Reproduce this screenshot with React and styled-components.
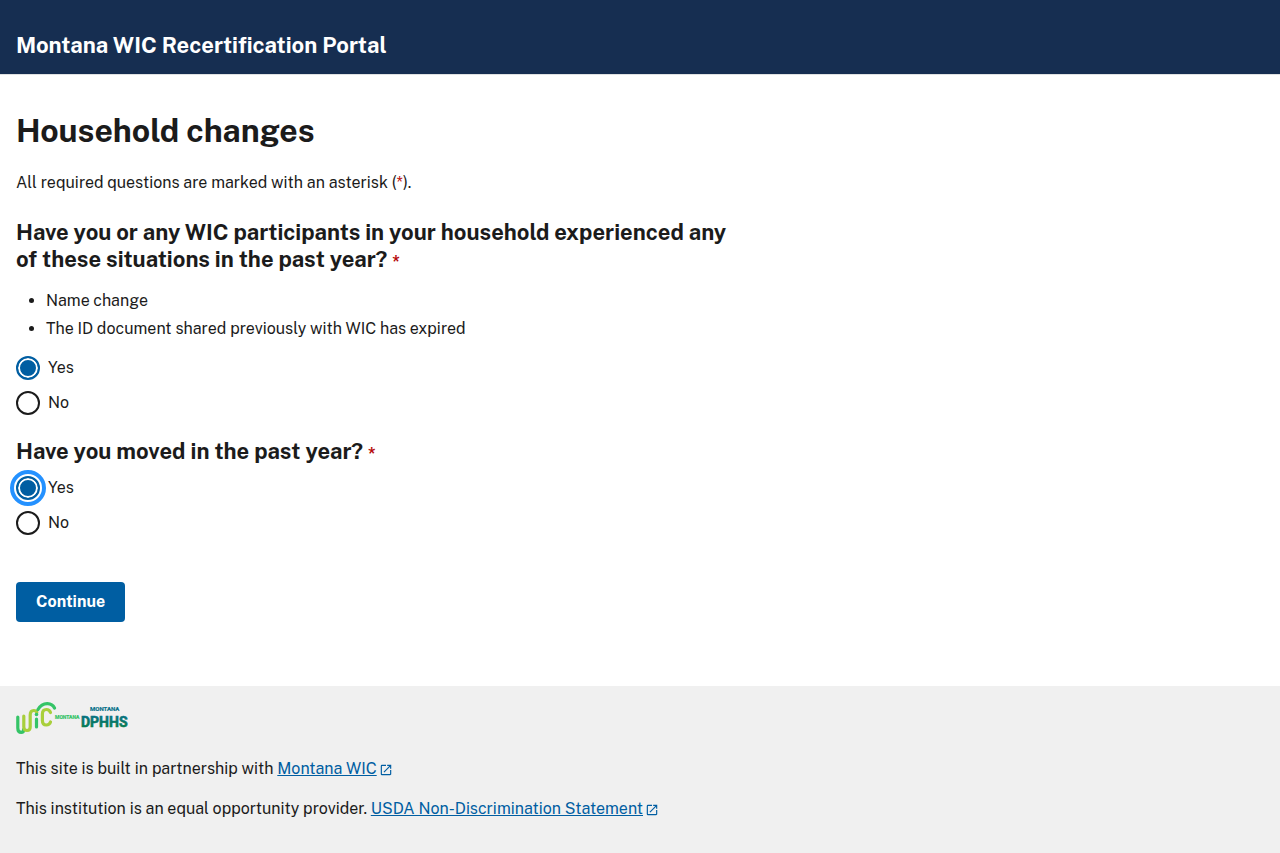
import React, { useEffect, useRef } from "react";
import styled, { createGlobalStyle } from "styled-components";

const GlobalStyle = createGlobalStyle`
  *, *::before, *::after { box-sizing: border-box; }
  html { background: #f0f0f0; }
  body {
    margin: 0;
    background: #fff;
    color: #1b1b1b;
    font-family: "Public Sans", Inter, Roboto, sans-serif;
    font-size: 16px;
    line-height: 24px;
  }
`;

const Header = styled.header`
  padding: 32px 16px 15px;
  background: #162e51;
  border-bottom: 1px solid #dfe1e2;
`;

const SiteTitle = styled.div`
  color: #fff;
  font-size: 22px;
  font-weight: 700;
  line-height: 27px;
`;

const Main = styled.main`
  padding: 32px 16px 64px;
`;

const PageTitle = styled.h1`
  margin: 0;
  font-size: 32px;
  font-weight: 700;
  line-height: 48px;
`;

const Intro = styled.p`
  margin: 16px 0 24px;
`;

const Required = styled.span`
  color: #b50909;
  font-size: 16px;
  font-weight: ${(p) => (p.$strong ? 700 : 400)};
`;

const Question = styled.fieldset`
  max-width: 720px;
  margin: 0 0 23px;
  padding: 0;
  border: 0;
`;

const Legend = styled.legend`
  padding: 0;
  font-size: 22px;
  font-weight: 700;
  line-height: 27px;
`;

const Situations = styled.ul`
  margin: 12px 0 4px;
  padding-left: 30px;
  line-height: 28px;
`;

const Options = styled.div`
  display: grid;
  gap: 11px;
  padding-top: 9px;
`;

const Option = styled.label`
  display: flex;
  align-items: center;
  gap: 8px;
  width: max-content;
`;

const Radio = styled.input`
  appearance: none;
  width: 24px;
  height: 24px;
  margin: 0;
  border: 2px solid #1b1b1b;
  border-radius: 50%;
  background: #fff;

  &:checked {
    border-color: #005ea2;
    background: #005ea2;
    box-shadow: inset 0 0 0 2px #fff;
  }

  &:focus {
    outline: 4px solid #2491ff;
    outline-offset: 2px;
  }
`;

const Continue = styled.button`
  margin-top: 24px;
  padding: 8px 20px;
  border: 0;
  border-radius: 4px;
  background: #005ea2;
  color: #fff;
  font: inherit;
  font-weight: 700;
  cursor: pointer;
`;

const Footer = styled.footer`
  padding: 16px 16px 32px;
  background: #f0f0f0;
`;

const Logo = styled.svg`
  display: block;
  width: 112px;
  height: 32px;
  margin-bottom: 23px;
`;

const LogoText = styled.text`
  font-family: Roboto, "Liberation Sans", sans-serif;
  font-weight: 700;
`;

const FooterText = styled.p`
  margin: 0 0 16px;

  &:last-child { margin-bottom: 0; }
`;

const Link = styled.a`
  color: #005ea2;
`;

const LinkIcon = styled.svg`
  width: 14px;
  height: 14px;
  margin-left: 2px;
  vertical-align: -3px;
  fill: currentColor;
`;

function ExternalLink({ href, children }) {
  return (
    <Link href={href}>
      {children}
      <LinkIcon viewBox="0 0 24 24" aria-hidden="true">
        <path d="M19 19H5V5h7V3H5a2 2 0 0 0-2 2v14a2 2 0 0 0 2 2h14c1.1 0 2-.9 2-2v-7h-2v7zM14 3v2h3.59l-9.83 9.83 1.41 1.41L19 6.41V10h2V3h-7z" />
      </LinkIcon>
    </Link>
  );
}

function YesNo({ name, yesRef }) {
  return (
    <Options>
      <Option>
        <Radio ref={yesRef} type="radio" name={name} value="yes" defaultChecked />
        Yes
      </Option>
      <Option>
        <Radio type="radio" name={name} value="no" />
        No
      </Option>
    </Options>
  );
}

function PartnerLogos() {
  return (
    <Logo viewBox="0 0 112 32" role="img" aria-label="Montana WIC and Montana DPHHS">
      <defs>
        <linearGradient id="agency" x1="0" y1="0" x2="0" y2="1">
          <stop offset="0" stopColor="#08708a" />
          <stop offset="1" stopColor="#087f45" />
        </linearGradient>
      </defs>
      <g fill="none" strokeWidth="3.2" strokeLinecap="round">
        <path stroke="#35c467" d="M1.8 15v11q0 4.400 3.400 4.400q2.400 0 2.400-3" />
        <path stroke="#a8cf3b" d="M7.800 14v11q0 3.500 3.200 3.500t3.200-3.500V13q0-4.500 3.600-4.500q2.400 0 3 2" />
        <path stroke="#35c467" d="M20.500 17v8M22 7.500q3.500-6 9.500-5.900q5 .1 7 4.400" />
        <path stroke="#a8cf3b" d="M34.500 10.500q-1-3-4.200-3q-3.900 0-3.900 4.500v6.500q0 4.500 3.900 4.500q3.200 0 4.200-3" />
      </g>
      <circle cx="20.500" cy="12.500" r="1.800" fill="#35c467" />
      <LogoText x="39" y="17" fontSize="5" fill="#35c467" stroke="#35c467" strokeWidth=".2">MONTANA</LogoText>
      <LogoText x="74" y="9" fontSize="6" fill="#08708a" stroke="#08708a" strokeWidth=".2">MONTANA</LogoText>
      <LogoText x="65" y="25" fontSize="14" fill="url(#agency)" stroke="url(#agency)" strokeWidth=".6">DPHHS</LogoText>
    </Logo>
  );
}

export default function App() {
  const movedYes = useRef(null);

  useEffect(() => {
    movedYes.current?.focus();
  }, []);

  return (
    <>
      <GlobalStyle />
      <Header>
        <SiteTitle>Montana WIC Recertification Portal</SiteTitle>
      </Header>
      <Main>
        <PageTitle>Household changes</PageTitle>
        <Intro>
          All required questions are marked with an asterisk (<Required>*</Required>).
        </Intro>
        <form onSubmit={(e) => e.preventDefault()}>
          <Question>
            <Legend>
              Have you or any WIC participants in your household experienced any of these
              situations in the past year? <Required $strong>*</Required>
            </Legend>
            <Situations>
              <li>Name change</li>
              <li>The ID document shared previously with WIC has expired</li>
            </Situations>
            <YesNo name="situations" />
          </Question>
          <Question>
            <Legend>
              Have you moved in the past year? <Required $strong>*</Required>
            </Legend>
            <YesNo name="moved" yesRef={movedYes} />
          </Question>
          <Continue type="submit">Continue</Continue>
        </form>
      </Main>
      <Footer>
        <PartnerLogos />
        <FooterText>
          This site is built in partnership with{" "}
          <ExternalLink href="#montana-wic">Montana WIC</ExternalLink>
        </FooterText>
        <FooterText>
          This institution is an equal opportunity provider.{" "}
          <ExternalLink href="#usda">USDA Non-Discrimination Statement</ExternalLink>
        </FooterText>
      </Footer>
    </>
  );
}
